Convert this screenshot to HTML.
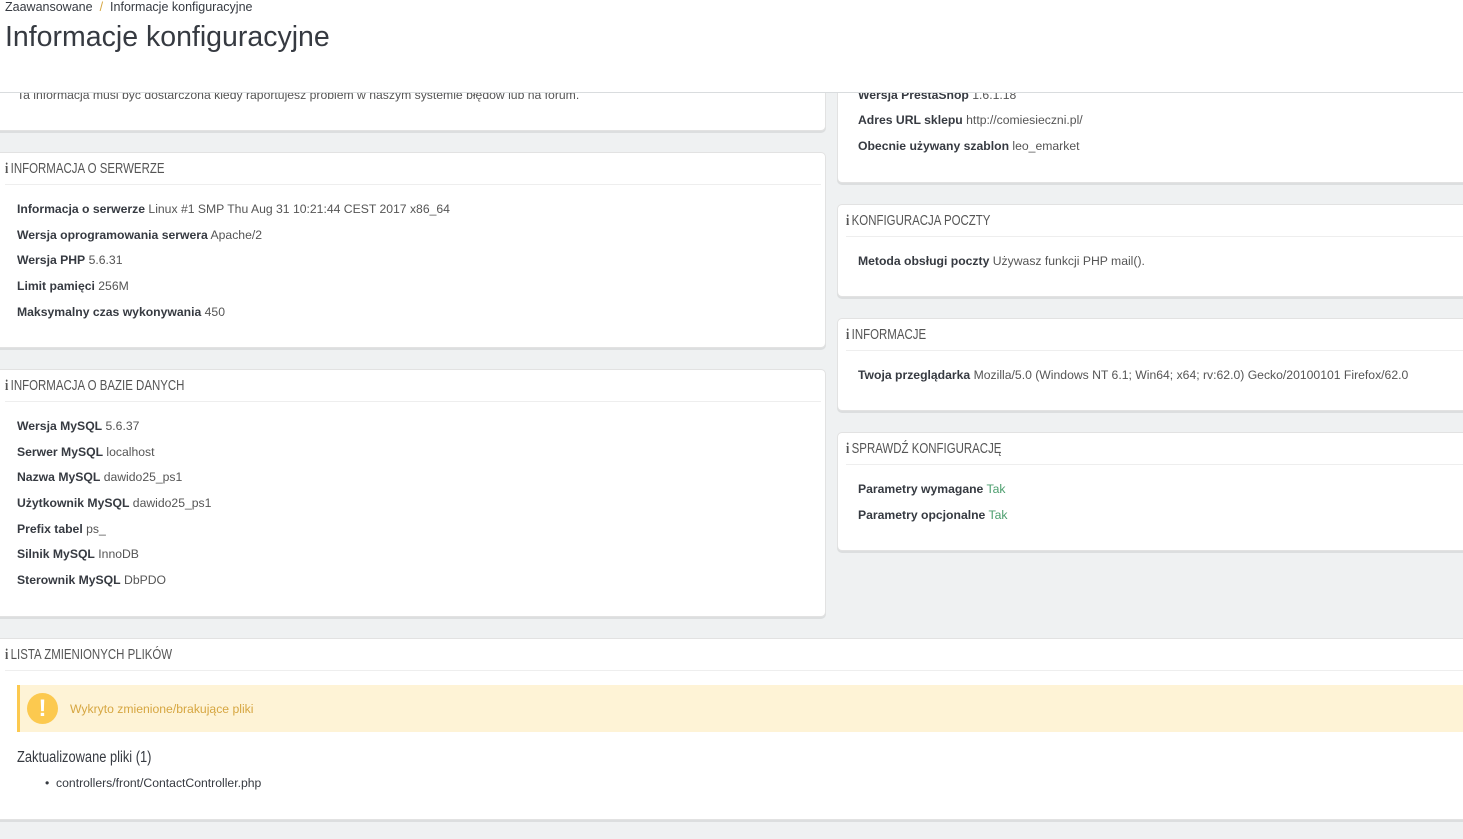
<!DOCTYPE html>
<html><head><meta charset="utf-8"><style>
*{box-sizing:border-box;margin:0;padding:0}
body{width:1463px;height:839px;overflow:hidden;background:#eff1f2;font-family:"Liberation Sans",sans-serif;font-size:12.2px;color:#555;position:relative}
.hdr{position:absolute;left:0;top:0;width:1463px;height:93px;background:#fff;border-bottom:1px solid #d9dcde;z-index:5}
.bc{position:absolute;left:5px;top:0;font-size:12.5px;color:#363a41}
.bc span{color:#d6a641;margin:0 7px}
h1{position:absolute;left:5px;top:21px;font-weight:normal;font-size:28.5px;color:#363a41}
.p{position:absolute;background:#fff;border:1px solid #e2e2e2;border-radius:5px;box-shadow:0 2px 0 rgba(0,0,0,.08)}
.ph{position:absolute;left:8px;right:0;top:0;height:32px;border-bottom:1px solid #eee;font-size:14.5px;color:#555;line-height:32px;white-space:nowrap}
.ph span{display:inline-block;transform:scaleX(.79);transform-origin:left center}
.ph b{font-family:"Liberation Serif",serif;font-weight:bold;color:#555;margin-right:3px;font-size:15px}
.r{position:absolute;left:20px;white-space:nowrap}
.r strong{color:#363a41}
.g{color:#4c9e6e}
</style></head><body>
<div class="hdr"><div class="bc">Zaawansowane<span>/</span>Informacje konfiguracyjne</div><h1>Informacje konfiguracyjne</h1></div>

<div class="p" style="left:-6px;top:60px;width:832px;height:71px"><div class="r" style="top:27px;left:22px">Ta informacja musi być dostarczona kiedy raportujesz problem w naszym systemie błędów lub na forum.</div></div>

<div class="p" style="left:837px;top:60px;width:640px;height:123px">
<div class="r" style="top:27px"><strong>Wersja PrestaShop</strong> 1.6.1.18</div>
<div class="r" style="top:52px"><strong>Adres URL sklepu</strong> http://comiesieczni.pl/</div>
<div class="r" style="top:78px"><strong>Obecnie używany szablon</strong> leo_emarket</div>
</div>

<div class="p" style="left:-6px;top:152px;width:832px;height:196px">
<div class="ph" style="left:10px;right:4px"><span><b>i</b>INFORMACJA O SERWERZE</span></div>
<div class="r" style="top:49px;left:22px"><strong>Informacja o serwerze</strong> Linux #1 SMP Thu Aug 31 10:21:44 CEST 2017 x86_64</div>
<div class="r" style="top:75px;left:22px"><strong>Wersja oprogramowania serwera</strong> Apache/2</div>
<div class="r" style="top:100px;left:22px"><strong>Wersja PHP</strong> 5.6.31</div>
<div class="r" style="top:126px;left:22px"><strong>Limit pamięci</strong> 256M</div>
<div class="r" style="top:152px;left:22px"><strong>Maksymalny czas wykonywania</strong> 450</div>
</div>

<div class="p" style="left:-6px;top:369px;width:832px;height:248px">
<div class="ph" style="left:10px;right:4px"><span><b>i</b>INFORMACJA O BAZIE DANYCH</span></div>
<div class="r" style="top:49px;left:22px"><strong>Wersja MySQL</strong> 5.6.37</div>
<div class="r" style="top:75px;left:22px"><strong>Serwer MySQL</strong> localhost</div>
<div class="r" style="top:100px;left:22px"><strong>Nazwa MySQL</strong> dawido25_ps1</div>
<div class="r" style="top:126px;left:22px"><strong>Użytkownik MySQL</strong> dawido25_ps1</div>
<div class="r" style="top:152px;left:22px"><strong>Prefix tabel</strong> ps_</div>
<div class="r" style="top:177px;left:22px"><strong>Silnik MySQL</strong> InnoDB</div>
<div class="r" style="top:203px;left:22px"><strong>Sterownik MySQL</strong> DbPDO</div>
</div>

<div class="p" style="left:837px;top:204px;width:640px;height:93px">
<div class="ph"><span><b>i</b>KONFIGURACJA POCZTY</span></div>
<div class="r" style="top:49px"><strong>Metoda obsługi poczty</strong> Używasz funkcji PHP mail().</div>
</div>

<div class="p" style="left:837px;top:318px;width:640px;height:93px">
<div class="ph"><span><b>i</b>INFORMACJE</span></div>
<div class="r" style="top:49px"><strong>Twoja przeglądarka</strong> Mozilla/5.0 (Windows NT 6.1; Win64; x64; rv:62.0) Gecko/20100101 Firefox/62.0</div>
</div>

<div class="p" style="left:837px;top:432px;width:640px;height:119px">
<div class="ph"><span><b>i</b>SPRAWDŹ KONFIGURACJĘ</span></div>
<div class="r" style="top:49px"><strong>Parametry wymagane</strong> <span class="g">Tak</span></div>
<div class="r" style="top:75px"><strong>Parametry opcjonalne</strong> <span class="g">Tak</span></div>
</div>

<div class="p" style="left:-6px;top:638px;width:1480px;height:182px">
<div class="ph" style="left:10px"><span><b>i</b>LISTA ZMIENIONYCH PLIKÓW</span></div>
<div style="position:absolute;left:22px;top:46px;width:1460px;height:47px;background:#fef3d6;border-left:3px solid #fcc94f">
<div style="position:absolute;left:7px;top:8px;width:31px;height:31px;border-radius:50%;background:#fcc94f;color:#fff;font-weight:bold;font-size:24px;text-align:center;line-height:31px">!</div>
<div style="position:absolute;left:50px;top:17px;color:#d6a641">Wykryto zmienione/brakujące pliki</div></div>
<div style="position:absolute;left:22px;top:110px;font-size:15.5px;color:#363a41;transform:scaleX(.83);transform-origin:left top;white-space:nowrap">Zaktualizowane pliki (1)</div>
<div style="position:absolute;left:50px;top:137px;color:#363a41">• &nbsp;controllers/front/ContactController.php</div>
</div>
</body></html>
